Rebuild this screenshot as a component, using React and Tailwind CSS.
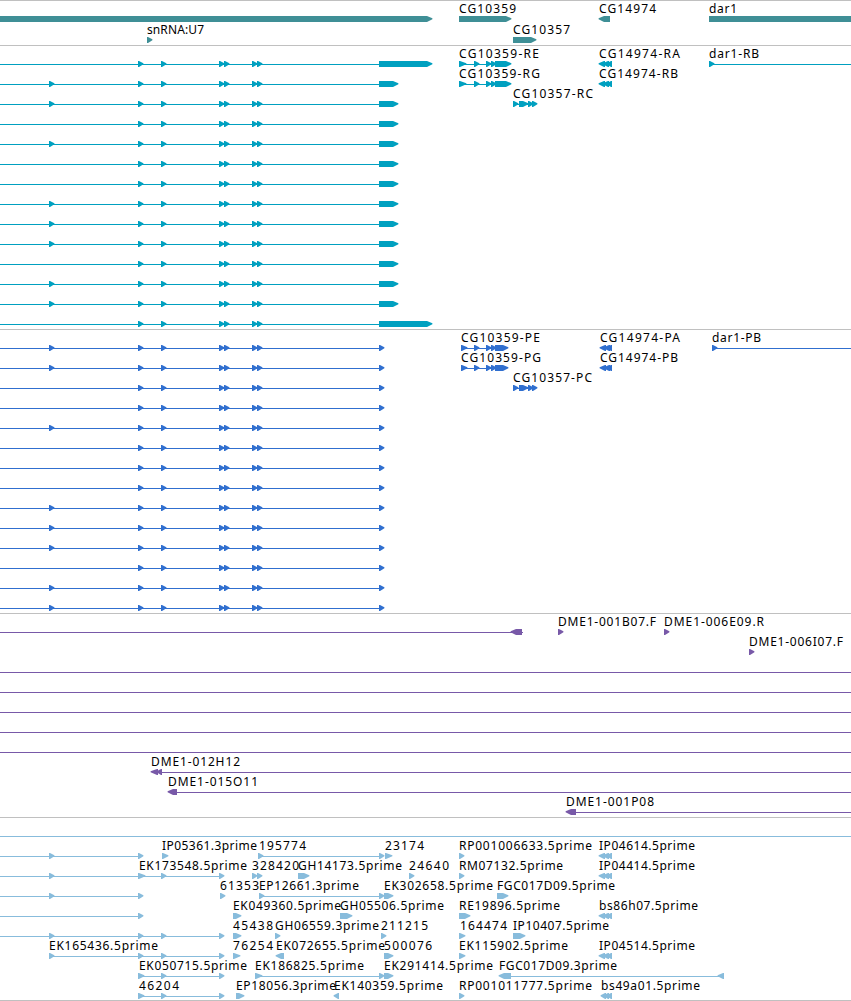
import clsx from 'clsx'

const GLYPH_TOP = 14

// [start, end] of each exon, shared by the splice variants of the left gene
const exons = [[138, 143], [161, 166], [219, 224], [224, 229], [252, 257], [257, 262]]
const firstExon = [49, 54]
const triple = [[599, 605], [603, 609], [607, 612]]

// label = [text, x, width]
const feature = (label, parts, line, reverse = false) => ({ label, parts, line, reverse })
const fwd = (text, x, width, end = x + 5) => feature([text, x, width], [[x, end]])
const rev = (text, x, width, end = x + 5) => feature([text, x, width], [[x, end]], null, true)

const geneRows = [
  [
    feature(null, [[0, 432]]),
    fwd('CG10359', 459, 57, 511),
    rev('CG14974', 599, 57, 610),
    fwd('dar1', 709, 28, 870),
  ],
  [fwd('snRNA:U7', 147, 57, 152), fwd('CG10357', 513, 57, 536)],
]

const longVariants = [1, 2, 4, 7, 8, 9, 11, 12]
const transcriptRows = Array.from({ length: 14 }, (_, i) => [
  feature(
    null,
    [...(longVariants.includes(i) ? [firstExon] : []), ...exons, [379, i === 0 || i === 13 ? 432 : 398]],
    [0, 380],
  ),
])
const exons10359 = [[459, 466], [474, 479], [486, 491], [491, 496], [495, 511]]
const exons10357 = [[513, 518], [519, 528], [528, 533], [532, 537]]
transcriptRows[0].push(
  feature(['CG10359-RE', 459, 80], exons10359, [459, 496]),
  feature(['CG14974-RA', 599, 81], triple, null, true),
  feature(['dar1-RB', 709, 50], [[709, 714]], [709, 851]),
)
transcriptRows[1].push(
  feature(['CG10359-RG', 459, 81], exons10359, [459, 496]),
  feature(['CG14974-RB', 599, 79], triple, null, true),
)
transcriptRows[2].push(feature(['CG10357-RC', 513, 80], exons10357, [513, 530]))

const longProteins = [0, 1, 4, 8, 9, 10, 12, 13]
const proteinRows = Array.from({ length: 14 }, (_, i) => [
  feature(null, [...(longProteins.includes(i) ? [firstExon] : []), ...exons, [379, 384]], [0, 380]),
])
const cds10359 = [[461, 467], [474, 479], [486, 491], [491, 496], [495, 508]]
const cds14974 = [[600, 606], [604, 610], [607, 612]]
proteinRows[0].push(
  feature(['CG10359-PE', 461, 79], cds10359, [461, 496]),
  feature(['CG14974-PA', 600, 80], cds14974, null, true),
  feature(['dar1-PB', 712, 49], [[712, 717]], [712, 851]),
)
proteinRows[1].push(
  feature(['CG10359-PG', 461, 80], cds10359, [461, 496]),
  feature(['CG14974-PB', 600, 78], cds14974, null, true),
)
proteinRows[2].push(feature(['CG10357-PC', 513, 79], exons10357, [513, 530]))

const spanning = [feature(null, [], [0, 851])]
const cloneRows = [
  [
    feature(null, [[511, 522]], [0, 523], true),
    fwd('DME1-001B07.F', 558, 98),
    fwd('DME1-006E09.R', 664, 100),
  ],
  [fwd('DME1-006I07.F', 749, 94)],
  spanning,
  spanning,
  spanning,
  spanning,
  spanning,
  [feature(['DME1-012H12', 151, 89], [[151, 158], [157, 162]], [155, 851], true)],
  [feature(['DME1-015O11', 168, 90], [[168, 177]], [172, 851], true)],
  [feature(['DME1-001P08', 566, 88], [[566, 576]], [570, 851], true)],
]

const estRows = [
  spanning,
  [
    feature(null, [firstExon, [138, 143]], [0, 140]),
    fwd('IP05361.3prime', 162, 95, 168),
    feature(['195774', 259, 47], [[258, 263], [379, 384]], [258, 380]),
    fwd('23174', 385, 39, 392),
    fwd('RP001006633.5prime', 459, 133),
    feature(['IP04614.5prime', 599, 96], triple, null, true),
  ],
  [
    feature(['EK173548.5prime', 139, 108], [firstExon, [138, 145], [161, 166], [219, 224]], [0, 220]),
    feature(['328420', 252, 47], [[252, 257], [257, 262]]),
    fwd('GH14173.5prime', 298, 104, 309),
    fwd('24640', 409, 40),
    fwd('RM07132.5prime', 459, 104),
    feature(['IP04414.5prime', 599, 96], triple, null, true),
  ],
  [
    feature(null, [firstExon, [138, 143]], [0, 140]),
    fwd('61353', 220, 39),
    feature(['EP12661.3prime', 259, 100], [[259, 264], [379, 384]], [259, 380]),
    fwd('EK302658.5prime', 384, 109, 393),
    fwd('FGC017D09.5prime', 497, 118, 508),
  ],
  [
    feature(null, [[138, 143]], [0, 140]),
    fwd('EK049360.5prime', 233, 108, 241),
    fwd('GH05506.5prime', 340, 104, 352),
    fwd('RE19896.5prime', 459, 101, 470),
    feature(['bs86h07.5prime', 599, 99], triple, null, true),
  ],
  [
    feature(null, [firstExon, [138, 143], [161, 166], [219, 224]], [0, 220]),
    fwd('45438', 233, 40, 241),
    fwd('GH06559.3prime', 275, 104),
    fwd('211215', 381, 47),
    feature(['164474', 460, 47], [[459, 465]]),
    fwd('IP10407.5prime', 513, 96, 525),
  ],
  [
    feature(['EK165436.5prime', 49, 109], [firstExon, [138, 143], [161, 166], [219, 224]], [49, 220]),
    fwd('76254', 233, 40, 240),
    rev('EK072655.5prime', 276, 109, 284),
    fwd('500076', 384, 48, 393),
    fwd('EK115902.5prime', 459, 109, 465),
    feature(['IP04514.5prime', 599, 96], triple, null, true),
  ],
  [
    feature(['EK050715.5prime', 139, 108], [[138, 144], [161, 166], [219, 224]], [139, 220]),
    feature(['EK186825.5prime', 255, 109], [[255, 262], [379, 384]], [255, 380]),
    fwd('EK291414.5prime', 384, 109, 393),
    feature(['FGC017D09.3prime', 499, 118], [[499, 511], [718, 724]], [505, 720], true),
  ],
  [
    feature(['46204', 139, 40], [[138, 144], [161, 166], [219, 224]], [139, 220]),
    fwd('EP18056.3prime', 236, 100, 244),
    rev('EK140359.5prime', 334, 109),
    fwd('RP001011777.5prime', 459, 133),
    feature(['bs49a01.5prime', 601, 99], [[601, 606], [604, 609], [607, 612]], null, true),
  ],
]

const tracks = [
  { name: 'genes', rows: geneRows, color: 'text-[#3f8f96]', box: 'h-[45px]', lane: 'h-[21px]' },
  { name: 'transcripts', rows: transcriptRows, color: 'text-[#00a0c0]', box: 'h-[284px]', lane: 'h-5' },
  { name: 'proteins', rows: proteinRows, color: 'text-[#306fcf]', box: 'h-[284px]', lane: 'h-5' },
  { name: 'clones', rows: cloneRows, color: 'text-[#7859a8]', box: 'h-[204px]', lane: 'h-5' },
  { name: 'ests', rows: estRows, color: 'text-[#88bcdc]', box: 'h-[183px]', lane: 'h-5' },
]

function arrowPoints([start, end], reverse) {
  const top = GLYPH_TOP
  const bottom = top + 6
  const width = end - start
  // short features are nearly all arrow head
  const shoulder = width <= 7 ? 1 : width - 5
  const dir = reverse ? -1 : 1
  const flat = reverse ? end : start
  const neck = flat + dir * shoulder
  const tip = flat + dir * (width + 0.4)
  return `${flat},${top} ${neck},${top} ${tip},${top + 2.3} ${tip},${top + 3.3} ${neck},${bottom} ${flat},${bottom}`
}

function Feature({ label, parts, line, reverse }) {
  return (
    <g>
      {line && (
        <rect
          x={line[0]}
          y={GLYPH_TOP + 3}
          width={line[1] - line[0]}
          height={1}
          fill="currentColor"
          shapeRendering="crispEdges"
        />
      )}
      {parts.map((part) => (
        <polygon key={part[0]} points={arrowPoints(part, reverse)} fill="currentColor" />
      ))}
      {label && (
        <text x={label[1]} y={GLYPH_TOP - 3} textLength={label[2]} className="fill-black">
          {label[0]}
        </text>
      )}
    </g>
  )
}

function Lane({ features, height }) {
  return (
    <svg className={clsx('block w-full shrink-0 overflow-visible', height)}>
      {features.map((f, i) => (
        <Feature key={i} {...f} />
      ))}
    </svg>
  )
}

export default function App() {
  return (
    <main className="w-[851px] h-[1001px] flex flex-col overflow-hidden border-t border-[#c0c0c0] bg-white font-['Noto_Sans',sans-serif] text-[12px]">
      {tracks.map((track) => (
        <section
          key={track.name}
          className={clsx('flex shrink-0 flex-col border-b border-[#c0c0c0] pt-px', track.box, track.color)}
        >
          {track.rows.map((row, i) => (
            <Lane key={i} features={row} height={track.lane} />
          ))}
        </section>
      ))}
    </main>
  )
}
